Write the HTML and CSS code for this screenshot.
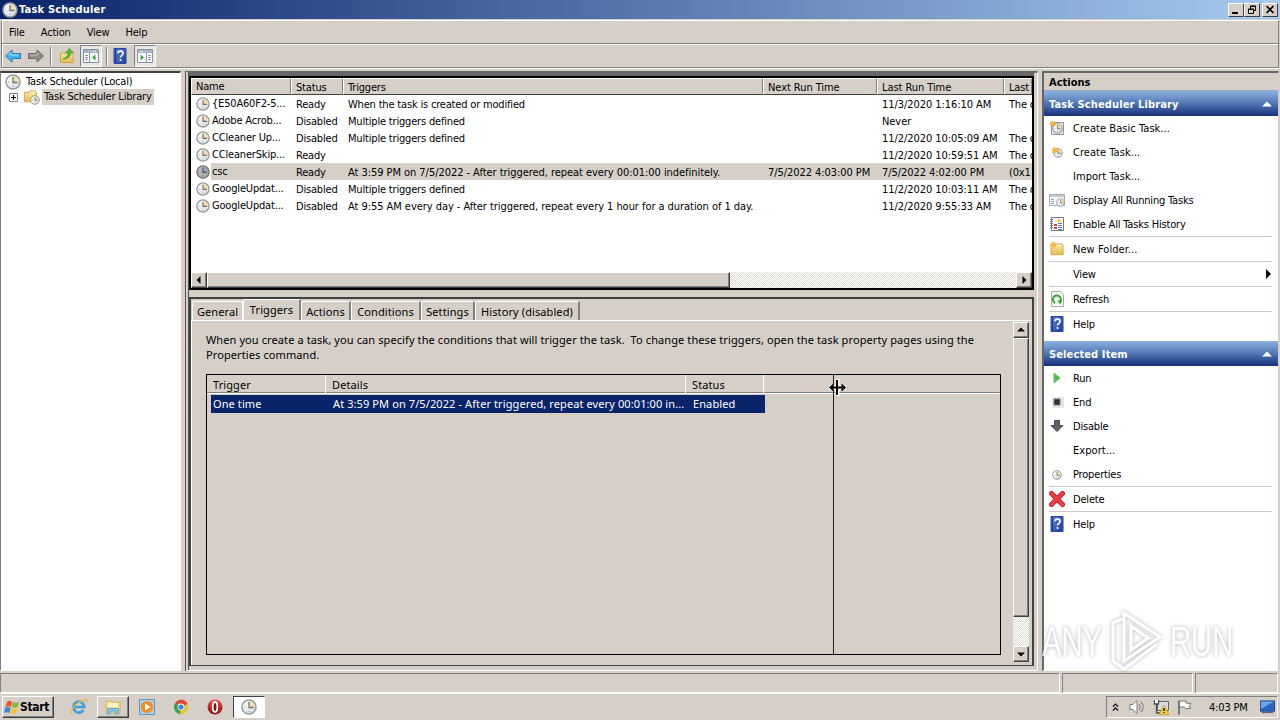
FILE: index.html
```html
<!DOCTYPE html>
<html lang="en">
<head>
    <meta charset="UTF-8">
    <title>Task Scheduler</title>
    <link rel="stylesheet" href="styles.css">
</head>

<body>
    <!-- Shared icons -->
    <svg class="sprite">
        <defs>
            <linearGradient id="g-face" x1="0" y1="0" x2="1" y2="1"><stop offset="0" stop-color="#ffffff"/><stop offset="1" stop-color="#d4d8dc"/></linearGradient>
            <linearGradient id="g-folder" x1="0" y1="0" x2="0" y2="1"><stop offset="0" stop-color="#fbe9a6"/><stop offset="1" stop-color="#e9bd55"/></linearGradient>
            <linearGradient id="g-blue" x1="0" y1="0" x2="1" y2="1"><stop offset="0" stop-color="#5c82d8"/><stop offset="1" stop-color="#1f3f9e"/></linearGradient>
            <linearGradient id="g-red" x1="0" y1="0" x2="0" y2="1"><stop offset="0" stop-color="#f04c4c"/><stop offset="1" stop-color="#8e0a0a"/></linearGradient>
        </defs>
        <symbol id="clock" viewBox="0 0 16 16">
            <circle cx="8" cy="8" r="7" fill="url(#g-face)" stroke="#96999c" stroke-width="1.500"/>
            <path d="M8 2.200A5.800 5.800 0 0 1 13.800 8H8z" fill="#f4dcb0"/>
            <path d="M8 3v5.500h4.500" fill="none" stroke="#77706a" stroke-width="1.300"/>
            <path d="M3 8h1M8 12v1" stroke="#9a9a9a"/>
        </symbol>
        <symbol id="folder" viewBox="0 0 16 16">
            <path d="M1.500 3.500h5l1-1.500h6v2h1v9.500h-13z" fill="url(#g-folder)" stroke="#d3a647"/>
            <path d="M8 3.500h5" stroke="#fff"/>
        </symbol>
        <symbol id="help" viewBox="0 0 16 16">
            <path d="M2 .5h12v15H2z" fill="url(#g-blue)" stroke="#27469c"/>
            <path d="M3.500 1v14" stroke="#1d3785"/>
            <path d="M6 5.300c0-3 5-3 5 0 0 2-2.500 2-2.500 4.200M8.500 11v2" fill="none" stroke="#fff" stroke-width="1.700"/>
        </symbol>
        <symbol id="window" viewBox="0 0 16 16">
            <path d="M.5 1.500h15v13H.5z" fill="#fbfbfb" stroke="#8792a0"/>
            <path d="M1 2h14v3H1z" fill="#a9b5c3"/>
            <path d="M10 3.500h1M12 3.500h1" stroke="#fff"/>
            <path d="M6.500 5v9" stroke="#8792a0"/>
            <path d="M2.500 7.500h2M2.500 9.500h2M2.500 11.500h2" stroke="#56687c"/>
            <path d="M12.500 6.500v6L9 9.500z" fill="#3da43a"/>
        </symbol>
        <symbol id="spark" viewBox="0 0 16 16">
            <path d="M8 0l1.500 4.500L14 3l-2 4 4 1-4 2 2 4-4.500-2L8 16l-1.500-4L2 14l2-4-4-2 4-1-2-4 4.500 1.500z" fill="#f2a927"/>
            <circle cx="8" cy="8" r="4" fill="#f8bd45"/>
        </symbol>
    </svg>

    <div class="title-bar">
        <svg class="icon"><use href="#clock"/></svg>
        <span class="title">Task Scheduler</span>
        <div class="window-buttons">
            <span class="win-btn"><svg viewBox="0 0 14 12"><path d="M3 9h6" stroke="#000" stroke-width="2"/></svg></span>
            <span class="win-btn"><svg viewBox="0 0 14 12"><path d="M5.500 5V2.500h5v4H9M5 2h6M3.500 5.500h5v4h-5zM3 5h6" fill="none" stroke="#000"/></svg></span>
            <span class="win-btn close"><svg viewBox="0 0 14 12"><path d="M3.500 2l7 7M10.500 2l-7 7" stroke="#000" stroke-width="1.600"/></svg></span>
        </div>
    </div>

    <div class="bars">
        <div class="menu-bar">
            <span>File</span><span>Action</span><span>View</span><span>Help</span>
        </div>
        <div class="toolbar">
            <svg class="tool" viewBox="0 0 16 16"><path d="M.5 8l6.500-6v3.500h8.500v5H7V14z" fill="#42b4ec" stroke="#2679ab"/><path d="M3 7.500l3-3v2.500h8" fill="none" stroke="#a5e3ff"/></svg>
            <svg class="tool back" viewBox="0 0 16 16"><path d="M15.500 8L9 2v3.500H.5v5H9V14z" fill="#8f8f8f" stroke="#686868"/><path d="M2 7h8V5" fill="none" stroke="#c0c0c0"/></svg>
            <span class="tool-sep"></span>
            <svg class="tool" viewBox="0 0 16 16"><path d="M1.500 5h5l1-1.500H14V14.500H1.500z" fill="url(#g-folder)" stroke="#cda143"/><path d="M4 11c3-1 5-3 5-6H6.500l4-4.500L14 5h-2.500c0 4-3 6-7.500 6z" fill="#57b737" stroke="#3a8a22" stroke-width=".6"/></svg>
            <span class="tool-pressed"><svg class="tool"><use href="#window"/></svg></span>
            <span class="tool-sep"></span>
            <svg class="tool"><use href="#help"/></svg>
            <span class="tool-pressed second"><svg class="tool flip"><use href="#window"/></svg></span>
        </div>
    </div>

    <div class="workspace">
        <div class="tree">
            <div class="tree-row root">
                <svg class="icon"><use href="#clock"/></svg>
                <span>Task Scheduler (Local)</span>
            </div>
            <div class="tree-row child">
                <svg class="expander" viewBox="0 0 9 9"><path d="M.5.5h8v8h-8z" fill="#fff" stroke="#848484"/><path d="M2 4.500h5M4.500 2v5" stroke="#000"/></svg>
                <svg class="icon lib" viewBox="0 0 17 16"><use href="#folder" width="15" height="15"/><use href="#clock" x="7" y="6" width="10" height="10"/></svg>
                <span class="selected">Task Scheduler Library</span>
            </div>
        </div>

        <div class="center">
            <div class="task-list">
                <div class="task-row task-head">
                    <span>Name</span><span>Status</span><span>Triggers</span><span>Next Run Time</span><span>Last Run Time</span><span>Last</span>
                </div>
                <div class="task-row">
                    <span><svg class="clock"><use href="#clock"/></svg>{E50A60F2-5...</span><span>Ready</span><span>When the task is created or modified</span><span></span><span>11/3/2020 1:16:10 AM</span><span>The o</span>
                </div>
                <div class="task-row">
                    <span><svg class="clock"><use href="#clock"/></svg>Adobe Acrob...</span><span>Disabled</span><span>Multiple triggers defined</span><span></span><span>Never</span><span></span>
                </div>
                <div class="task-row">
                    <span><svg class="clock"><use href="#clock"/></svg>CCleaner Up...</span><span>Disabled</span><span>Multiple triggers defined</span><span></span><span>11/2/2020 10:05:09 AM</span><span>The o</span>
                </div>
                <div class="task-row">
                    <span><svg class="clock"><use href="#clock"/></svg>CCleanerSkip...</span><span>Ready</span><span></span><span></span><span>11/2/2020 10:59:51 AM</span><span>The o</span>
                </div>
                <div class="task-row active">
                    <span><svg class="clock"><use href="#clock"/></svg>csc</span><span>Ready</span><span class="long">At 3:59 PM on 7/5/2022 - After triggered, repeat every 00:01:00 indefinitely.</span><span>7/5/2022 4:03:00 PM</span><span>7/5/2022 4:02:00 PM</span><span>(0x1</span>
                </div>
                <div class="task-row">
                    <span><svg class="clock"><use href="#clock"/></svg>GoogleUpdat...</span><span>Disabled</span><span>Multiple triggers defined</span><span></span><span>11/2/2020 10:03:11 AM</span><span>The o</span>
                </div>
                <div class="task-row">
                    <span><svg class="clock"><use href="#clock"/></svg>GoogleUpdat...</span><span>Disabled</span><span class="long">At 9:55 AM every day - After triggered, repeat every 1 hour for a duration of 1 day.</span><span></span><span>11/2/2020 9:55:33 AM</span><span>The o</span>
                </div>
                <div class="hscroll">
                    <span class="scroll-btn"><svg viewBox="0 0 8 8"><path d="M5.500 0v8L1.500 4z"/></svg></span>
                    <span class="thumb"></span>
                    <span class="scroll-btn end"><svg viewBox="0 0 8 8"><path d="M2.500 0v8l4-4z"/></svg></span>
                </div>
            </div>

            <div class="details">
                <div class="tabs">
                    <span class="tab general">General</span><span class="tab current">Triggers</span><span class="tab actions-tab">Actions</span><span class="tab conditions">Conditions</span><span class="tab settings">Settings</span><span class="tab history">History (disabled)</span>
                </div>
                <div class="tab-page">
                    <div class="page-body">
                        <p>When you create a task, you can specify the conditions that will trigger the task.&nbsp; To change these triggers, open the task property pages using the<br>Properties command.</p>
                        <div class="trigger-table">
                            <div class="trigger-head"><span>Trigger</span><span>Details</span><span>Status</span></div>
                            <div class="trigger-row"><span>One time</span><span>At 3:59 PM on 7/5/2022 - After triggered, repeat every 00:01:00 in...</span><span>Enabled</span></div>
                            <div class="resize-line"></div>
                            <svg class="cursor" viewBox="0 0 17 17"><path d="M8.500 0v17M0 8.500h17" stroke="#fff" stroke-width="4"/><path d="M8 1v15M1 8.500h15" stroke="#000" stroke-width="2"/><path d="M0 8.500l4.500-4v8zM17 8.500l-4.500-4v8z"/></svg>
                        </div>
                    </div>
                    <div class="vscroll">
                        <span class="scroll-btn"><svg viewBox="0 0 8 8"><path d="M0 5.500h8L4 1.500z"/></svg></span>
                        <span class="thumb"></span>
                        <span class="scroll-btn end"><svg viewBox="0 0 8 8"><path d="M0 2.500h8l-4 4z"/></svg></span>
                    </div>
                </div>
            </div>
        </div>

        <div class="actions">
            <div class="actions-title">Actions</div>
            <div class="group-head"><span>Task Scheduler Library</span><svg viewBox="0 0 10 6"><path d="M0 5.500h10L5 .5z" fill="#fff"/></svg></div>
            <div class="action"><svg class="icon" viewBox="0 0 16 16"><path d="M2.500 2.500h12v12h-12z" fill="#f0eeee" stroke="#a08d92"/><use href="#clock" x="3" y="3" width="11" height="11"/><use href="#spark" x="0" y="0" width="7" height="7"/></svg><span class="dots">Create Basic Task...</span></div>
            <div class="action"><svg class="icon" viewBox="0 0 16 16"><use href="#clock" x="4" y="4" width="10" height="10"/><use href="#spark" x="2" y="2" width="8" height="8"/></svg><span class="dots">Create Task...</span></div>
            <div class="action"><span class="icon"></span><span class="dots">Import Task...</span></div>
            <div class="action"><svg class="icon" viewBox="0 0 16 16"><path d="M.5 2.500h15v11H.5z" fill="#f7f8f8" stroke="#a5abb0"/><path d="M1 3h14v2H1z" fill="#c1c9cf"/><path d="M2 7.500h3M2 9.500h3M2 11.500h3" stroke="#8da2a5"/><use href="#clock" x="7" y="6" width="9" height="9"/></svg><span>Display All Running Tasks</span></div>
            <div class="action"><svg class="icon" viewBox="0 0 16 16"><path d="M2.500 1.500h12v13h-12z" fill="#fff" stroke="#71768c"/><path d="M1 3.500h3M1 5.500h3M1 7.500h3M1 9.500h3M1 11.500h3" stroke="#8a7680"/><path d="M10 2l3 4H8z" fill="#f3cd30"/><path d="M5 8h3v2H5zM5 11h3v2H5z" fill="#c94444"/><path d="M9 7.500h4M9 9.500h4M9 11.500h4M9 13.500h4" stroke="#6277b5"/></svg><span>Enable All Tasks History</span></div>
            <hr>
            <div class="action"><svg class="icon" viewBox="0 0 16 16"><use href="#folder" y="1" width="16" height="15"/><use href="#spark" x="1" y="0" width="7" height="7"/></svg><span class="dots">New Folder...</span></div>
            <hr>
            <div class="action"><span class="icon"></span><span>View</span><svg class="submenu" viewBox="0 0 5 10"><path d="M0 0v10l5-5z"/></svg></div>
            <hr>
            <div class="action"><svg class="icon" viewBox="0 0 16 16"><path d="M2.500.5h9l3 3v12h-12z" fill="#f2f8f0" stroke="#a3b3a3"/><path d="M6 12A4 4 0 1 1 11 11" fill="none" stroke="#3da63b" stroke-width="2"/><path d="M8.500 9.500h5l-2.500 4z" fill="#3da63b"/></svg><span>Refresh</span></div>
            <hr>
            <div class="action"><svg class="icon"><use href="#help"/></svg><span>Help</span></div>
            <div class="group-head second"><span>Selected Item</span><svg viewBox="0 0 10 6"><path d="M0 5.500h10L5 .5z" fill="#fff"/></svg></div>
            <div class="action"><svg class="icon" viewBox="0 0 16 16"><path d="M5 3v10l6-5z" fill="#4cb944" stroke="#70c76a"/></svg><span>Run</span></div>
            <div class="action"><svg class="icon" viewBox="0 0 16 16"><path d="M3 3h12v11H3z" fill="#e6e6e6"/><path d="M5 5h6v6H5z" fill="#30302e" stroke="#777"/></svg><span>End</span></div>
            <div class="action"><svg class="icon" viewBox="0 0 16 16"><path d="M5.500 2.500h5v5h3.500L8 13.500 2 7.500h3.500z" fill="#626262" stroke="#484848"/></svg><span>Disable</span></div>
            <div class="action"><span class="icon"></span><span class="dots">Export...</span></div>
            <div class="action"><svg class="icon" viewBox="0 0 16 16"><use href="#clock" x="3" y="4" width="10" height="10"/></svg><span>Properties</span></div>
            <hr>
            <div class="action"><svg class="icon" viewBox="0 0 16 16"><path d="M2.500 2.500l11 11M13.500 2.500l-11 11" stroke="#b52331" stroke-width="5" stroke-linecap="round"/><path d="M2.500 2.500l11 11M13.500 2.500l-11 11" stroke="#ea3d46" stroke-width="3.500" stroke-linecap="round"/></svg><span>Delete</span></div>
            <hr>
            <div class="action"><svg class="icon"><use href="#help"/></svg><span>Help</span></div>

            <div class="watermark">
                <span>ANY</span>
                <svg viewBox="0 0 58 64"><path d="M17 4v48L53 28z M24 17v24l17-12z M15 10L6 14v38l11 8 33-25" fill="none" stroke="#fff" stroke-width="3"/></svg>
                <span>RUN</span>
            </div>
        </div>
    </div>

    <div class="status-bar"><span></span><span></span><span></span></div>

    <div class="taskbar">
        <div class="start">
            <svg viewBox="0 0 16 16"><path d="M3 3c2-2 4-1 5 0L7 8C5 7 4 7 1.500 8z" fill="#e8562a"/><path d="M9 3c2 1 4 1 6-.5L13.500 8c-2 1-4 1-5.500 0z" fill="#7eb93c"/><path d="M1 9c2-1.500 4-1 5.500 0L5.500 14c-2-1-3.500-1-5.500 0z" fill="#3c86d4"/><path d="M7.500 9c2 1 4 1 6 0L12 14c-2 1.500-4 1-5.500 0z" fill="#f6c530"/></svg>
            <span>Start</span>
        </div>
        <div class="task-btn ie"><svg viewBox="0 0 18 18"><path d="M13.500 12a5.500 5.500 0 1 1 .8-3H4" fill="none" stroke="#3ba0dd" stroke-width="2.600"/><path d="M2 15C-1 17 2 9 8 5s11-5 8-1" fill="none" stroke="#e8bd42" stroke-width="1.500"/></svg></div>
        <div class="task-btn raised"><svg viewBox="0 0 18 18"><path d="M2 3h5l1 1h8v11H2z" fill="#f4dc85" stroke="#d9b454"/><path d="M4 5h10v4H4z" fill="#fff6ce"/><path d="M3.500 16v-5.500h11V16h-3v-3h-5v3z" fill="#8dc9e9" stroke="#58a5cf"/></svg></div>
        <div class="task-btn"><svg viewBox="0 0 18 18"><path d="M1.500 1.500h15v15h-15z" fill="#a9d0e8" stroke="#6397bd"/><circle cx="9" cy="9" r="6" fill="#f18a20"/><path d="M7 5.500v7L12.500 9z" fill="#fff"/></svg></div>
        <div class="task-btn"><svg viewBox="0 0 18 18"><circle cx="9" cy="9" r="7" fill="#e7c32d"/><path d="M9 9L3 5.300A7 7 0 0 1 15.500 6z" fill="#da4a3b"/><path d="M9 9L3 5.300A7 7 0 0 0 8 16z" fill="#3aa255"/><path d="M9 2a7 7 0 0 1 6.500 4H9z" fill="#da4a3b"/><circle cx="9" cy="9" r="3.400" fill="#fff"/><circle cx="9" cy="9" r="2.600" fill="#4384de"/></svg></div>
        <div class="task-btn"><svg viewBox="0 0 18 18"><circle cx="9" cy="9" r="7.500" fill="url(#g-red)"/><ellipse cx="9" cy="9" rx="2.300" ry="5" fill="#8f1010" stroke="#fff" stroke-width="1.800"/></svg></div>
        <div class="task-btn pressed"><svg viewBox="0 0 18 18"><use href="#clock" x="1" y="1" width="16" height="16"/></svg></div>
        <div class="tray">
            <svg class="chevrons" viewBox="0 0 8 10"><path d="M1 4l3-3 3 3M1 8.500l3-3 3 3" fill="none" stroke="#000" stroke-width="1.400"/></svg>
            <svg class="icon" viewBox="0 0 16 16"><path d="M1 5.500h3l4-4v13l-4-4H1z" fill="#fff" stroke="#7a7a7a"/><path d="M10 5c1.500 2 1.500 4 0 6M12 3c3 3 3 7 0 10" fill="none" stroke="#828282" stroke-width="1.200"/></svg>
            <svg class="icon net" viewBox="0 0 16 16"><path d="M4.500 2.500h11v9h-11z" fill="#d7dce0" stroke="#666"/><path d="M1 1h5v4H1z" fill="#fff"/><path d="M1.500 1v4h4V1M3.500 5v9h4" fill="none" stroke="#4d4d4d" stroke-width="1.300"/><path d="M11 6l5 9.500H6z" fill="#f6d233" stroke="#b79517" stroke-width=".6"/><path d="M11 9v3M11 13v1" stroke="#000" stroke-width="1.300"/></svg>
            <svg class="icon flag" viewBox="0 0 16 16"><path d="M2 1.500v14" stroke="#777" stroke-width="2"/><path d="M3 2h6v2l5 .5-2 3 2 1.500-5 1-1.500-2H3" fill="#fff" stroke="#777"/></svg>
            <span class="time">4:03 PM</span>
            <svg class="desktop" viewBox="0 0 16 14"><path d="M.5.5h15v11H.5z" fill="#2c67bd" stroke="#173f83"/><path d="M1 1h14L1 9z" fill="#6fa7e6"/><path d="M2 13h12" stroke="#547"/></svg>
        </div>
    </div>
</body>
</html>
```
FILE: styles.css
```css
:root {
    --face: #d5cfc8;
    --shadow: #808080;
    --dark: #404040;
    --navy: #0a246a;
}

* {
    box-sizing: border-box;
}

body {
    margin: 0;
    width: 1280px;
    height: 720px;
    overflow: hidden;
    display: flex;
    flex-direction: column;
    background: var(--face);
    font-family: 'DejaVu Sans Condensed', 'DejaVu Sans', sans-serif;
    font-stretch: condensed;
    font-size: 11px;
    line-height: 17px;
    letter-spacing: -0.18px;
    color: #000;
    white-space: nowrap;
}

.sprite {
    position: absolute;
    width: 0;
    height: 0;
}

svg {
    flex: none;
}

.icon {
    width: 16px;
    height: 16px;
    flex: none;
}

/* Title bar */
.title-bar {
    height: 19px;
    flex: none;
    display: flex;
    align-items: center;
    padding: 0 2px;
    gap: 1px;
    background: linear-gradient(90deg, #0a246a, #a6caf0);
    color: #fff;
    font-weight: bold;
    letter-spacing: 0.2px;
}

.window-buttons {
    margin-left: auto;
    display: flex;
}

.win-btn {
    width: 16px;
    height: 14px;
    background: var(--face);
    border: 1px solid;
    border-color: #fff var(--dark) var(--dark) #fff;
}

.win-btn svg {
    display: block;
    width: 14px;
    height: 12px;
}

.win-btn.close {
    margin-left: 2px;
}

/* Menu and toolbar */
.bars {
    height: 48px;
    flex: none;
    margin: 1px 1px 0;
    border: 1px solid var(--shadow);
    border-top-color: #fff;
    box-shadow: inset 1px 0 #fff, 0 1px #fff;
}

.menu-bar {
    height: 23px;
    display: flex;
    align-items: center;
    gap: 16px;
    padding: 0 7px;
    border-bottom: 1px solid var(--shadow);
}

.toolbar {
    height: 23px;
    border-top: 1px solid #fff;
    display: flex;
    align-items: center;
    padding-left: 3px;
}

.tool {
    width: 16px;
    height: 16px;
    display: block;
}

.tool.back {
    margin-left: 7px;
}

.tool.flip {
    transform: scaleX(-1);
}

.tool-sep {
    width: 2px;
    height: 19px;
    margin: 0 7px 0 6px;
    border-left: 1px solid var(--shadow);
    border-right: 1px solid #fff;
}

.tool-pressed {
    width: 22px;
    height: 22px;
    padding: 2px;
    margin-left: 5px;
    border: 1px solid;
    border-color: var(--shadow) #fff #fff var(--shadow);
    background: #e9e7e3;
}

.tool-pressed + .tool-sep {
    margin-left: 4px;
    margin-right: 4px;
}

.tool-pressed.second {
    margin-left: 6px;
}

/* Three panes */
.workspace {
    height: 600px;
    flex: none;
    margin-top: 3px;
    display: flex;
}

.tree {
    width: 181px;
    border: 1px solid var(--shadow);
    border-top: 2px solid var(--dark);
    border-right-color: #fff;
    border-bottom-color: #fff;
    background: #fff;
}

.tree-row {
    height: 16px;
    display: flex;
    align-items: center;
}

.root {
    padding: 1px 0 0 4px;
    gap: 5px;
}

.child {
    padding-left: 8px;
}

.expander {
    width: 9px;
    height: 9px;
}

.lib {
    width: 17px;
    margin: 0 2px 0 5px;
}

.selected {
    padding: 0 2px;
    height: 16px;
    line-height: 16px;
    background: var(--face);
}

.center {
    width: 853px;
    margin-left: 4px;
    padding: 3px 3px 4px 0;
    border: 1px solid #666;
    border-top-width: 2px;
    border-left: 4px double #555;
    border-right-color: #fff;
    border-bottom-color: #fff;
    display: flex;
    flex-direction: column;
    gap: 7px;
}

/* Task list */
.task-list {
    height: 214px;
    border: 2px solid #000;
    box-shadow: 0 -3px #666;
    background: #fff;
    display: flex;
    flex-direction: column;
    overflow: hidden;
}

.task-row {
    height: 17px;
    flex: none;
    display: grid;
    grid-template-columns: 100px 52px 420px 114px 127px 28px;
    line-height: 19px;
}

.task-row span {
    height: 17px;
    padding-left: 5px;
    overflow: hidden;
    white-space: pre;
}

.task-row span:first-child {
    display: flex;
    align-items: center;
}

.task-row span:nth-child(4),
.task-row span:nth-child(5) {
    letter-spacing: -0.06px;
}

.task-row .long {
    letter-spacing: -0.05px;
}

.clock {
    width: 14px;
    height: 14px;
    margin-right: 2px;
}

.task-head {
    line-height: 17px;
}

.task-row.task-head span {
    padding-left: 4px;
    background: var(--face);
    border: 1px solid;
    border-color: #fff var(--shadow) var(--dark) #fff;
}

.active span {
    background: var(--face);
}

.active span:first-child {
    background: linear-gradient(90deg, #fff 20px, var(--face) 20px);
}

.active .clock {
    filter: brightness(0.75) hue-rotate(180deg);
}

/* Scroll bars */
.hscroll,
.vscroll {
    display: flex;
    flex: none;
    background: repeating-conic-gradient(#fff 0 25%, #dedad4 0 50%) 0 0 / 2px 2px;
}

.hscroll {
    height: 16px;
    margin-top: auto;
}

.vscroll {
    width: 16px;
    height: 340px;
    flex-direction: column;
}

.scroll-btn {
    width: 16px;
    height: 16px;
    display: flex;
    align-items: center;
    justify-content: center;
}

.scroll-btn,
.thumb {
    background: var(--face);
    border: 1px solid;
    border-color: #fff var(--dark) var(--dark) #fff;
    box-shadow: inset -1px -1px var(--shadow);
}

.scroll-btn svg {
    width: 8px;
    height: 8px;
}

.hscroll .thumb {
    width: 523px;
}

.hscroll .end {
    margin-left: auto;
}

.vscroll .thumb {
    height: 279px;
}

.vscroll .end {
    margin-top: auto;
}

/* Details pane */
.details {
    flex: 1;
    border: 1px solid var(--dark);
    border-width: 2px 2px 1px;
    font-family: 'Noto Sans', sans-serif;
    font-stretch: normal;
    font-size: 11px;
    letter-spacing: 0.1px;
    display: flex;
    flex-direction: column;
}

.tabs {
    height: 21px;
    display: flex;
    align-items: flex-end;
    padding-left: 1px;
}

.tab {
    height: 19px;
    line-height: 19px;
    text-align: center;
    border: 1px solid #fff;
    border-right: 2px solid var(--shadow);
    border-bottom: 0;
    border-radius: 2px 2px 0 0;
    overflow: hidden;
}

.general { width: 51px; border-right: 1px solid #fff; }
.current { width: 58px; height: 21px; }
.actions-tab { width: 50px; }
.conditions { width: 70px; }
.settings { width: 54px; }
.history { width: 105px; }

.tab-page {
    flex: 1;
    display: flex;
    border-top: 1px solid #fff;
    border-left: 1px solid #fff;
    padding-top: 1px;
    padding-right: 3px;
}

.page-body {
    flex: 1;
    min-width: 0;
    padding: 10px 12px 0 14px;
}

.page-body p {
    margin: 0 0 12px;
    line-height: 15px;
}

.trigger-table {
    position: relative;
    width: 795px;
    height: 281px;
    border: 1px solid #000;
}

.trigger-head {
    height: 19px;
    display: flex;
    border-bottom: 1px solid #fff;
    box-shadow: inset 0 -1px var(--shadow);
}

.trigger-head span {
    padding-left: 6px;
    border-right: 1px solid #fff;
    line-height: 19px;
}

.trigger-head span:nth-child(1) { width: 119px; }
.trigger-head span:nth-child(2) { width: 360px; }
.trigger-head span:nth-child(3) { width: 78px; }

.trigger-row {
    display: grid;
    grid-template-columns: 120px 360px 74px;
    width: 554px;
    height: 18px;
    margin: 1px 0 0 4px;
    line-height: 18px;
    background: var(--navy);
    color: #fff;
}

.trigger-row span {
    padding-left: 2px;
}

/* Column drag feedback lies over the table */
.resize-line {
    position: absolute;
    left: 626px;
    top: 0;
    bottom: 0;
    width: 1px;
    background: #222;
}

.cursor {
    position: absolute;
    left: 622px;
    top: 4px;
    width: 17px;
    height: 17px;
}

/* Actions pane */
.actions {
    position: relative;
    width: 237px;
    margin-left: 4px;
    border-left: 2px solid #666;
    border-top: 2px solid #666;
    border-right: 1px solid var(--face);
    border-bottom: 1px solid #fff;
    background: #fff;
}

.actions-title {
    height: 18px;
    line-height: 19px;
    padding-left: 5px;
    font-weight: bold;
    letter-spacing: 0;
    background: var(--face);
    border-bottom: 1px solid #8ba7c9;
}

.group-head {
    height: 25px;
    line-height: 25px;
    padding: 1px 6px 0 5px;
    display: flex;
    align-items: center;
    justify-content: space-between;
    background: linear-gradient(#8db3e0, #4a6fb0 55%, #17307a);
    color: #fff;
    font-weight: bold;
    letter-spacing: 0.12px;
}

.group-head svg {
    width: 10px;
    height: 6px;
}

.group-head.second {
    margin-top: 5px;
}

.action {
    height: 24px;
    display: flex;
    align-items: center;
    gap: 8px;
    padding: 0 7px 0 5px;
}

.dots {
    letter-spacing: 0.05px;
}

.submenu {
    width: 5px;
    height: 10px;
    margin-left: auto;
}

.actions hr {
    height: 1px;
    margin: 0 6px 0 5px;
    border: 0;
    background: #c8c8c8;
}

.watermark {
    position: absolute;
    left: -2px;
    top: 536px;
    display: flex;
    align-items: center;
    gap: 5px;
    font-family: 'Liberation Sans', sans-serif;
    font-size: 43px;
    letter-spacing: 0;
    line-height: 64px;
    color: #fff;
    filter: drop-shadow(0 0 2px #999);
    opacity: 0.75;
}

.watermark span {
    width: 60px;
    transform: scaleX(0.68);
    transform-origin: left;
}

.watermark svg {
    width: 58px;
    height: 64px;
}

/* Status bar */
.status-bar {
    height: 20px;
    flex: none;
    margin-top: 2px;
    display: flex;
    gap: 2px;
}

.status-bar span {
    border: 1px solid;
    border-color: var(--shadow) #fff #fff var(--shadow);
}

.status-bar span:nth-child(1) { width: 1060px; }
.status-bar span:nth-child(2) { width: 131px; }
.status-bar span:nth-child(3) { width: 83px; }

/* Taskbar */
.taskbar {
    flex: 1;
    display: flex;
    align-items: center;
    padding: 0 2px;
    border-top: 1px solid #fff;
}

.start {
    width: 52px;
    height: 22px;
    display: flex;
    align-items: center;
    padding-left: 1px;
    font-weight: bold;
    font-size: 12px;
    letter-spacing: -0.3px;
    border: 1px solid;
    border-color: #fff var(--dark) var(--dark) #fff;
    box-shadow: inset -1px -1px var(--shadow);
}

.start svg {
    width: 16px;
    height: 16px;
}

.task-btn {
    width: 32px;
    height: 22px;
    margin-right: 2px;
    display: flex;
    align-items: center;
    justify-content: center;
}

.task-btn.ie {
    margin-left: 9px;
}

.task-btn svg {
    width: 18px;
    height: 18px;
}

.raised {
    border: 1px solid;
    border-color: #fff var(--dark) var(--dark) #fff;
    box-shadow: inset -1px -1px var(--shadow);
}

.pressed {
    background: #fff;
    border: 1px solid;
    border-color: var(--dark) #fff #fff var(--dark);
}

.tray {
    width: 172px;
    height: 22px;
    margin-left: auto;
    display: flex;
    align-items: center;
    padding-left: 5px;
    border: 1px solid;
    border-color: var(--shadow) #fff #fff var(--shadow);
}

.chevrons {
    width: 7px;
    height: 9px;
    margin-right: 10px;
}

.net {
    margin-left: 8px;
}

.flag {
    margin-left: 8px;
}

.time {
    width: 48px;
    margin-left: 16px;
}

.desktop {
    width: 15px;
    height: 14px;
    margin-left: 3px;
}
```
